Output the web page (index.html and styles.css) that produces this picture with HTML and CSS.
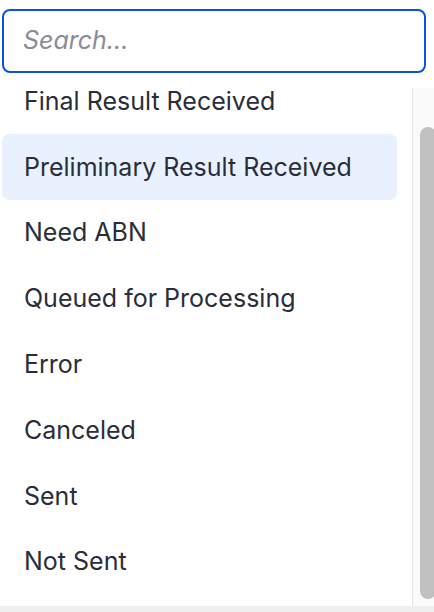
FILE: index.html
```html
<!DOCTYPE html>
<html>
<head>
<meta charset="utf-8">
<link rel="stylesheet" href="styles.css">
</head>
<body>
<div class="page">
  <div class="search-wrap">
    <input class="search" type="text" placeholder="Search...">
  </div>
  <div class="list-area">
    <div class="list-viewport">
      <ul class="list">
        <li class="item">Final Result Received</li>
        <li class="item active">Preliminary Result Received</li>
        <li class="item">Need ABN</li>
        <li class="item">Queued for Processing</li>
        <li class="item">Error</li>
        <li class="item">Canceled</li>
        <li class="item">Sent</li>
        <li class="item">Not Sent</li>
      </ul>
    </div>
    <div class="scrollbar"><div class="thumb"></div></div>
  </div>
  <div class="bottom-strip"></div>
</div>
</body>
</html>
```
FILE: styles.css
```css
html, body {
  margin: 0;
  padding: 0;
  background: #ffffff;
}
.page {
  width: 434px;
  height: 612px;
  overflow: hidden;
  display: flex;
  flex-direction: column;
  font-family: Inter, "Noto Sans", sans-serif;
}
.search-wrap {
  padding: 9px 8px 0 2px;
  height: 88px;
  flex: none;
  box-sizing: border-box;
}
.search {
  box-sizing: border-box;
  width: 424px;
  height: 64px;
  border: 2.5px solid #0a52e6;
  border-radius: 8px;
  padding: 0 0 2px 19px;
  font-family: Inter, "Noto Sans", sans-serif;
  font-size: 25px;
  color: #2a2d3a;
  outline: none;
  background: #fff;
}
.search::placeholder {
  color: #8b8b94;
  font-style: italic;
}
.list-area {
  height: 518px;
  flex: none;
  display: flex;
  flex-direction: row;
}
.list-viewport {
  width: 412px;
  height: 518px;
  overflow: hidden;
}
.list {
  list-style: none;
  margin: -20px 0 0 0;
  padding: 0 15px 0 2px;
}
.item {
  height: 65.8px;
  display: flex;
  align-items: center;
  padding-left: 22px;
  font-size: 25px;
  line-height: 22px;
  color: #2a2d3a;
  border-radius: 7px;
}
.item.active {
  background: #e9f1fe;
}
.scrollbar {
  width: 22px;
  height: 518px;
  border-left: 1px solid #e6e6e6;
  background: #fafafa;
  padding-left: 7px;
  box-sizing: border-box;
}
.thumb {
  margin-top: 39px;
  height: 472px;
  width: 16px;
  background: #c1c1c1;
  border-radius: 8px;
}
.bottom-strip {
  height: 6px;
  flex: none;
  background: #efefef;
}
```
